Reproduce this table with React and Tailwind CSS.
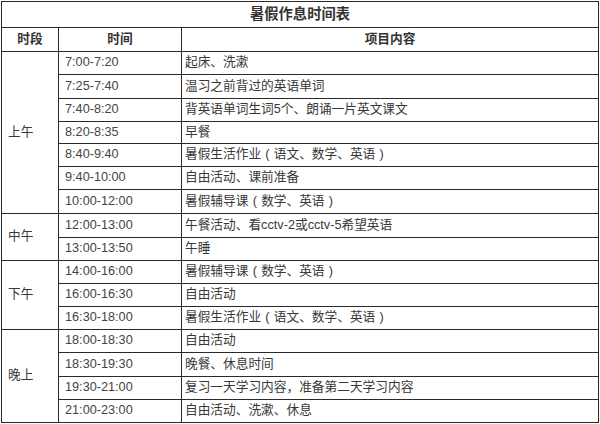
import React from "react";

const P = ({ c }) => <span className="inline-block w-[1em] text-center">{c}</span>;

const hw = (
  <>
    暑假生活作业<P c="(" />语文、数学、英语<P c=")" />
  </>
);
const fd = (
  <>
    暑假辅导课<P c="(" />数学、英语<P c=")" />
  </>
);

const groups = [
  {
    name: "上午",
    rows: [
      ["7:00-7:20", "起床、洗漱", "h-[23px]"],
      ["7:25-7:40", "温习之前背过的英语单词", "h-[24px]"],
      ["7:40-8:20", "背英语单词生词5个、朗诵一片英文课文", "h-[23px]"],
      ["8:20-8:35", "早餐", "h-[22px]"],
      ["8:40-9:40", hw, "h-[23px]"],
      ["9:40-10:00", "自由活动、课前准备", "h-[23px]"],
      ["10:00-12:00", fd, "h-[24px]"],
    ],
  },
  {
    name: "中午",
    rows: [
      ["12:00-13:00", "午餐活动、看cctv-2或cctv-5希望英语", "h-[24px]"],
      ["13:00-13:50", "午睡", "h-[23px]"],
    ],
  },
  {
    name: "下午",
    rows: [
      ["14:00-16:00", fd, "h-[23px]"],
      ["16:00-16:30", "自由活动", "h-[23px]"],
      ["16:30-18:00", hw, "h-[23px]"],
    ],
  },
  {
    name: "晚上",
    rows: [
      ["18:00-18:30", "自由活动", "h-[23px]"],
      ["18:30-19:30", "晚餐、休息时间", "h-[24px]"],
      ["19:30-21:00", "复习一天学习内容，准备第二天学习内容", "h-[23px]"],
      ["21:00-23:00", "自由活动、洗漱、休息", "h-[23px]"],
    ],
  },
];

export default function App() {
  return (
    <div
      className="w-[600px] h-[424px] bg-white overflow-hidden pt-[1px] pl-[1px] text-[#383838]"
      style={{ fontFamily: '"Liberation Sans", "Noto Sans CJK SC", sans-serif' }}
    >
      <div className="w-[598px] border-l border-t border-[#2a2a2a]">
        <div className="h-[26px] border-r border-b border-[#2a2a2a] flex items-center justify-center text-[14.3px] font-bold text-[#333]">
          暑假作息时间表
        </div>
        <div className="flex h-[24px] text-[12.7px] font-bold text-[#333]">
          <div className="w-[57px] border-r border-b border-[#2a2a2a] flex items-center justify-center">时段</div>
          <div className="w-[123px] border-r border-b border-[#2a2a2a] flex items-center justify-center">时间</div>
          <div className="flex-1 border-r border-b border-[#2a2a2a] flex items-center justify-center">项目内容</div>
        </div>
        {groups.map((g) => (
          <div key={g.name} className="flex text-[12.7px]">
            <div className="w-[57px] border-r border-b border-[#2a2a2a] flex items-center pl-[6px]">
              {g.name}
            </div>
            <div className="flex-1 flex flex-col">
              {g.rows.map(([t, c, h]) => (
                <div key={t} className={`flex ${h}`}>
                  <div className="w-[123px] border-r border-b border-[#2a2a2a] flex items-center pl-[6px] text-[#444]">
                    {t}
                  </div>
                  <div className="flex-1 border-r border-b border-[#2a2a2a] flex items-center pl-[3px]">
                    {c}
                  </div>
                </div>
              ))}
            </div>
          </div>
        ))}
      </div>
    </div>
  );
}
